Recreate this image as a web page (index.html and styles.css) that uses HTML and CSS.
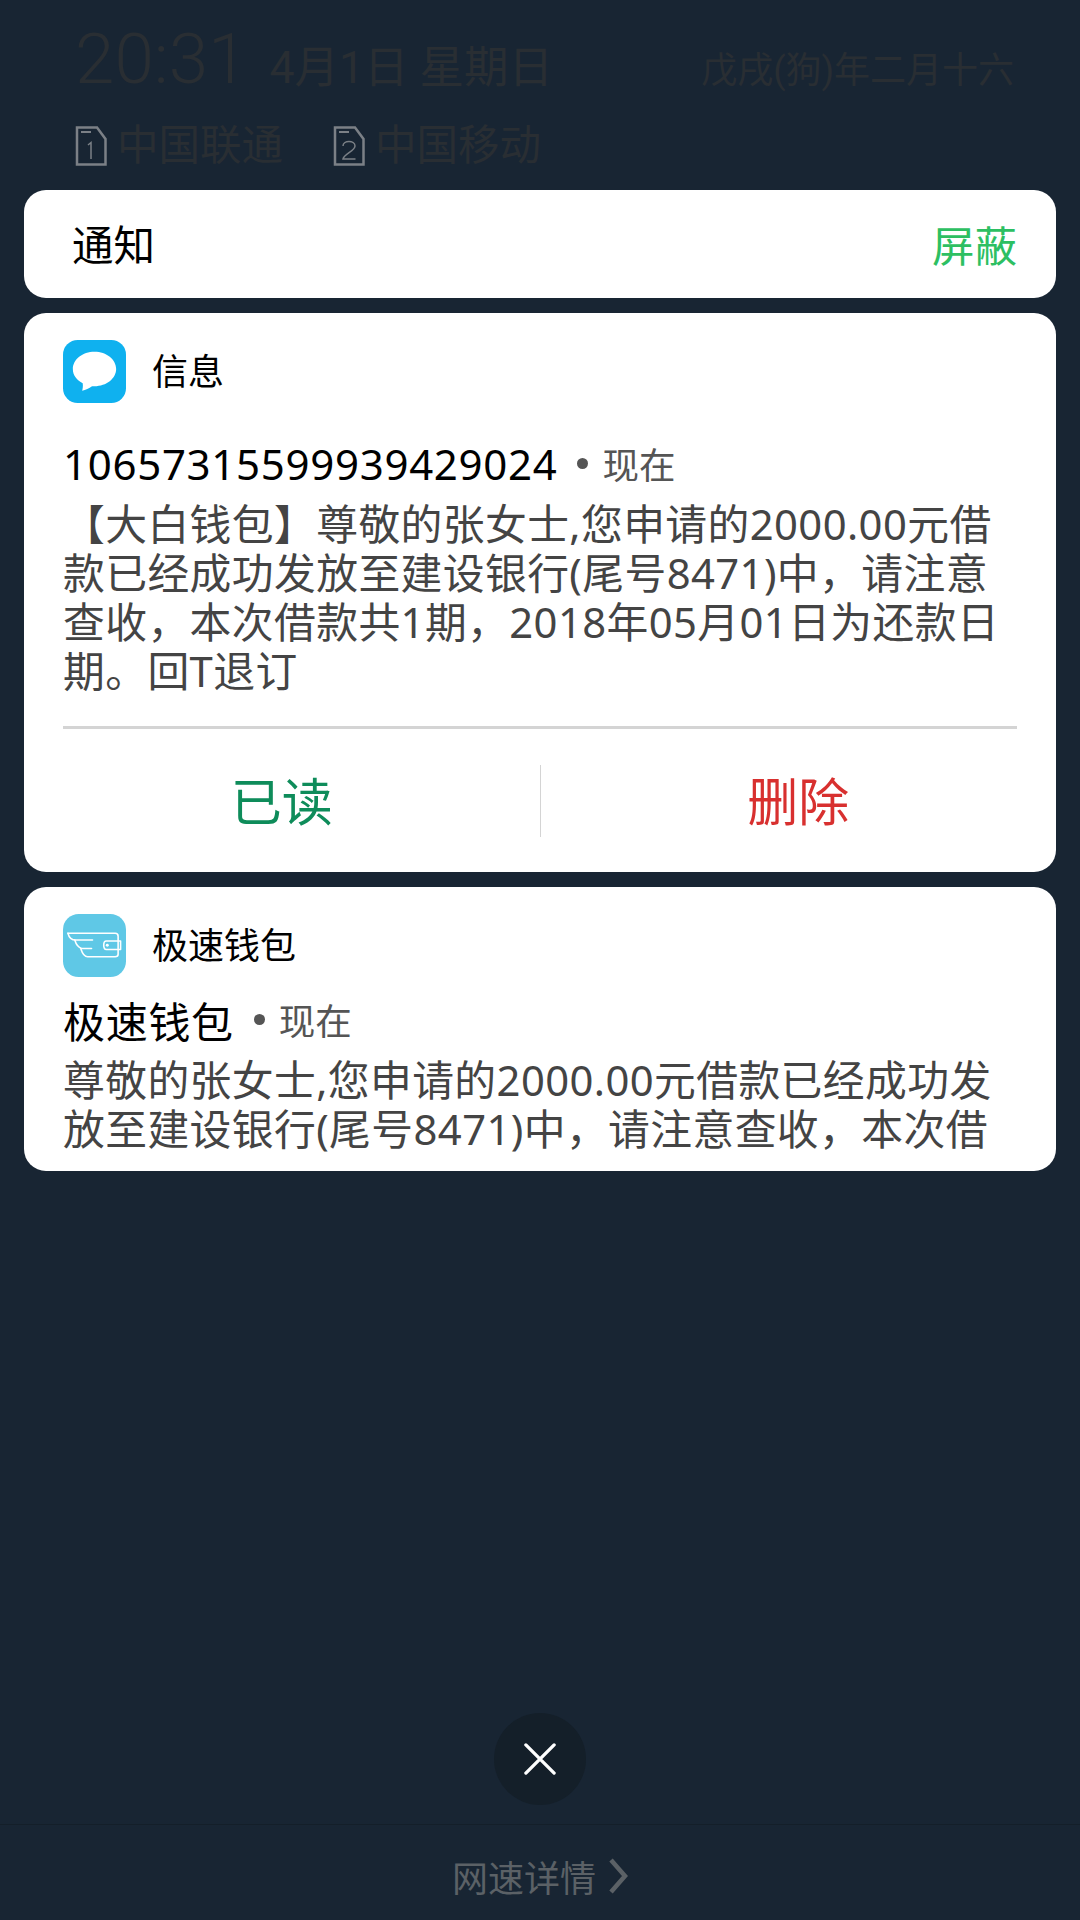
FILE: index.html
```html
<!DOCTYPE html>
<html lang="zh-CN">
<head>
<meta charset="UTF-8" />
<meta name="viewport" content="width=device-width, initial-scale=1.0" />
<title>通知</title>
<link rel="stylesheet" href="styles.css">
</head>
<body>
<div class="screen">
  <header class="status">
    <div class="status-top">
      <span class="clock">20:31</span>
      <span class="date">4月1日 星期日</span>
      <span class="lunar">戊戌(狗)年二月十六</span>
    </div>
    <div class="carriers">
      <div class="carrier">
        <svg class="sim" width="32" height="40" viewBox="0 0 32 40">
          <path d="M2 1.500H22L30.500 13V38.500H2Z" fill="none" stroke="#7b8086" stroke-width="2.500" />
          <path d="M6 6H16" stroke="#7b8086" stroke-width="2" />
          <path d="M13 19L16 16.500V33" fill="none" stroke="#7b8086" stroke-width="1.500" />
        </svg>
        <span>中国联通</span>
      </div>
      <div class="carrier">
        <svg class="sim" width="32" height="40" viewBox="0 0 32 40">
          <path d="M2 1.500H22L30.500 13V38.500H2Z" fill="none" stroke="#7b8086" stroke-width="2.500" />
          <path d="M6 6H16" stroke="#7b8086" stroke-width="2" />
          <path d="M10 20C10 14 22 14 22 20C22 25 11 28 10 33H22.500" fill="none" stroke="#7b8086" stroke-width="1.500" />
        </svg>
        <span>中国移动</span>
      </div>
    </div>
  </header>

  <main class="cards">
    <section class="card bar">
      <span class="bar-title">通知</span>
      <span class="bar-action">屏蔽</span>
    </section>

    <section class="card notice">
      <div class="app-row">
        <svg class="app-icon" width="63" height="63" viewBox="0 0 64 64">
          <rect width="64" height="64" rx="15" fill="#0fb1ef" />
          <path d="M32 12C19.900 12 10 19.900 10 29.500C10 36.500 14.500 41 20 44C20.500 47 20 49.500 19.500 51.500C23 51 26.500 49 29.500 47C30.500 47 31 47 32 47C44.100 47 54 39.100 54 29.500C54 19.900 44.100 12 32 12Z" fill="#fff" />
        </svg>
        <span class="app-name">信息</span>
      </div>
      <div class="sender-row sender-sms">
        <span class="sender">10657315599939429024</span>
        <span class="dot"></span>
        <span class="when">现在</span>
      </div>
      <p class="body">【大白钱包】尊敬的张女士,您申请的2000.00元借款已经成功发放至建设银行(尾号8471)中，请注意查收，本次借款共1期，2018年05月01日为还款日期。回T退订</p>
      <div class="actions">
        <span class="action read">已读</span>
        <span class="action-sep"></span>
        <span class="action del">删除</span>
      </div>
    </section>

    <section class="card notice clipped">
      <div class="app-row">
        <svg class="app-icon" width="63" height="63" viewBox="0 0 64 64">
          <rect width="64" height="64" rx="16" fill="#5fc8e6" />
          <g fill="none" stroke="#fff" stroke-width="1.600" stroke-linejoin="round" stroke-linecap="round">
            <path d="M5 19.500H53C55 19.500 56 20.500 56 22.500V41C56 42.500 55 43.500 53 43.500H25C22 43.500 20 41 18 35" />
            <path d="M5 19.500C6 23.500 9 26.500 13 26.500H30" />
            <path d="M12 26.500C13 30 15 34 19 35H29" />
            <path d="M44 27.500H58.500V36H44C40.500 36 40.500 27.500 44 27.500Z" />
          </g>
          <circle cx="45" cy="31.800" r="1.500" fill="#fff" />
        </svg>
        <span class="app-name">极速钱包</span>
      </div>
      <div class="sender-row sender-app">
        <span class="sender">极速钱包</span>
        <span class="dot"></span>
        <span class="when">现在</span>
      </div>
      <p class="body">尊敬的张女士,您申请的2000.00元借款已经成功发放至建设银行(尾号8471)中，请注意查收，本次借</p>
    </section>
  </main>

  <div class="close-wrap">
    <div class="close">
      <svg width="32" height="32" viewBox="0 0 34 34">
        <path d="M2 2L32 32M32 2L2 32" stroke="#fff" stroke-width="3.500" stroke-linecap="round" />
      </svg>
    </div>
  </div>

  <footer class="footer">
    <span>网速详情</span>
    <svg width="20" height="36" viewBox="0 0 20 36">
      <path d="M3 2L17 18L3 34" fill="none" stroke="#5b6166" stroke-width="4.500" />
    </svg>
  </footer>
</div>
</body>
</html>
```

FILE: styles.css
```css
* {
  box-sizing: border-box;
}

html, body {
  margin: 0;
  padding: 0;
}

body {
  font-family: Roboto, 'Noto Sans CJK SC', sans-serif;
  background-color: #182533;
}

.screen {
  width: 1080px;
  height: 1920px;
  display: flex;
  flex-direction: column;
  overflow: hidden;
}

/* dimmed lock screen header */
.status {
  height: 190px;
  padding: 20px 66px 0 75px;
  color: #292e33;
}

.status-top {
  display: flex;
  align-items: baseline;
  height: 78px;
}

.clock {
  font-size: 71px;
  font-weight: 300;
  line-height: 78px;
}

.date {
  font-size: 44.500px;
  margin-left: 22px;
}

.lunar {
  font-size: 36px;
  margin-left: auto;
}

.carriers {
  display: flex;
  gap: 50px;
  margin-top: 20px;
}

.carrier {
  display: flex;
  align-items: center;
  gap: 10px;
  font-size: 41.500px;
  line-height: 56px;
}

.cards {
  display: flex;
  flex-direction: column;
  gap: 15px;
  padding: 0 24px;
}

.card {
  background-color: #fff;
  border-radius: 22px;
}

.bar {
  height: 108px;
  padding: 0 39px 0 48px;
  display: flex;
  align-items: center;
  justify-content: space-between;
}

.bar-title {
  font-size: 41.500px;
  color: #000;
  margin-bottom: 2px;
}

.bar-action {
  font-size: 42.500px;
  color: #2dbf62;
  margin-bottom: 2px;
}

.notice {
  padding: 26px 39px 0;
}

.app-row {
  display: flex;
  align-items: center;
  gap: 26px;
  height: 64px;
}

.app-name {
  font-size: 36px;
  color: #000;
  margin-bottom: 4px;
}

.sender-row {
  display: flex;
  align-items: center;
  height: 50px;
}

.sender-sms {
  margin-top: 35px;
}

.sender-app {
  margin: 17px 0 2px;
}

.sender {
  font-family: 'Noto Sans', 'Noto Sans CJK SC', sans-serif;
  font-size: 42px;
  letter-spacing: 0.700px;
  color: #000;
}

.dot {
  width: 11px;
  height: 11px;
  border-radius: 50%;
  background-color: #555;
  margin: 0 14px 0 20px;
}

.when {
  font-size: 36.500px;
  color: #555;
}

.body {
  margin: 11px 0 0;
  font-family: 'Noto Sans', 'Noto Sans CJK SC', sans-serif;
  font-size: 41.800px;
  letter-spacing: 0.400px;
  line-height: 49px;
  color: #444;
}

.actions {
  margin: 31px -39px 0;
  position: relative;
  height: 146px;
  display: flex;
  align-items: center;
}

/* the rule stays inside the card padding, the buttons do not */
.actions::before {
  content: "";
  position: absolute;
  top: 0;
  left: 39px;
  right: 39px;
  height: 3px;
  background-color: #d4d4d4;
}

.action {
  flex: 1;
  text-align: center;
  font-size: 51px;
}

.read {
  color: #0e8c5a;
}

.del {
  color: #d8302f;
}

.action-sep {
  width: 1px;
  height: 72px;
  margin-top: 3px;
  background-color: #d4d4d4;
}

.clipped {
  height: 284px;
}

.close-wrap {
  flex: 1;
  display: flex;
  justify-content: center;
  align-items: flex-end;
  padding-bottom: 19px;
}

.close {
  width: 92px;
  height: 92px;
  border-radius: 50%;
  background-color: #141f29;
  display: flex;
  align-items: center;
  justify-content: center;
}

.footer {
  height: 96px;
  border-top: 1px solid #141f29;
  display: flex;
  align-items: center;
  justify-content: center;
  gap: 12px;
  font-size: 36px;
  color: #5b6166;
  padding-top: 7px;
}
```
